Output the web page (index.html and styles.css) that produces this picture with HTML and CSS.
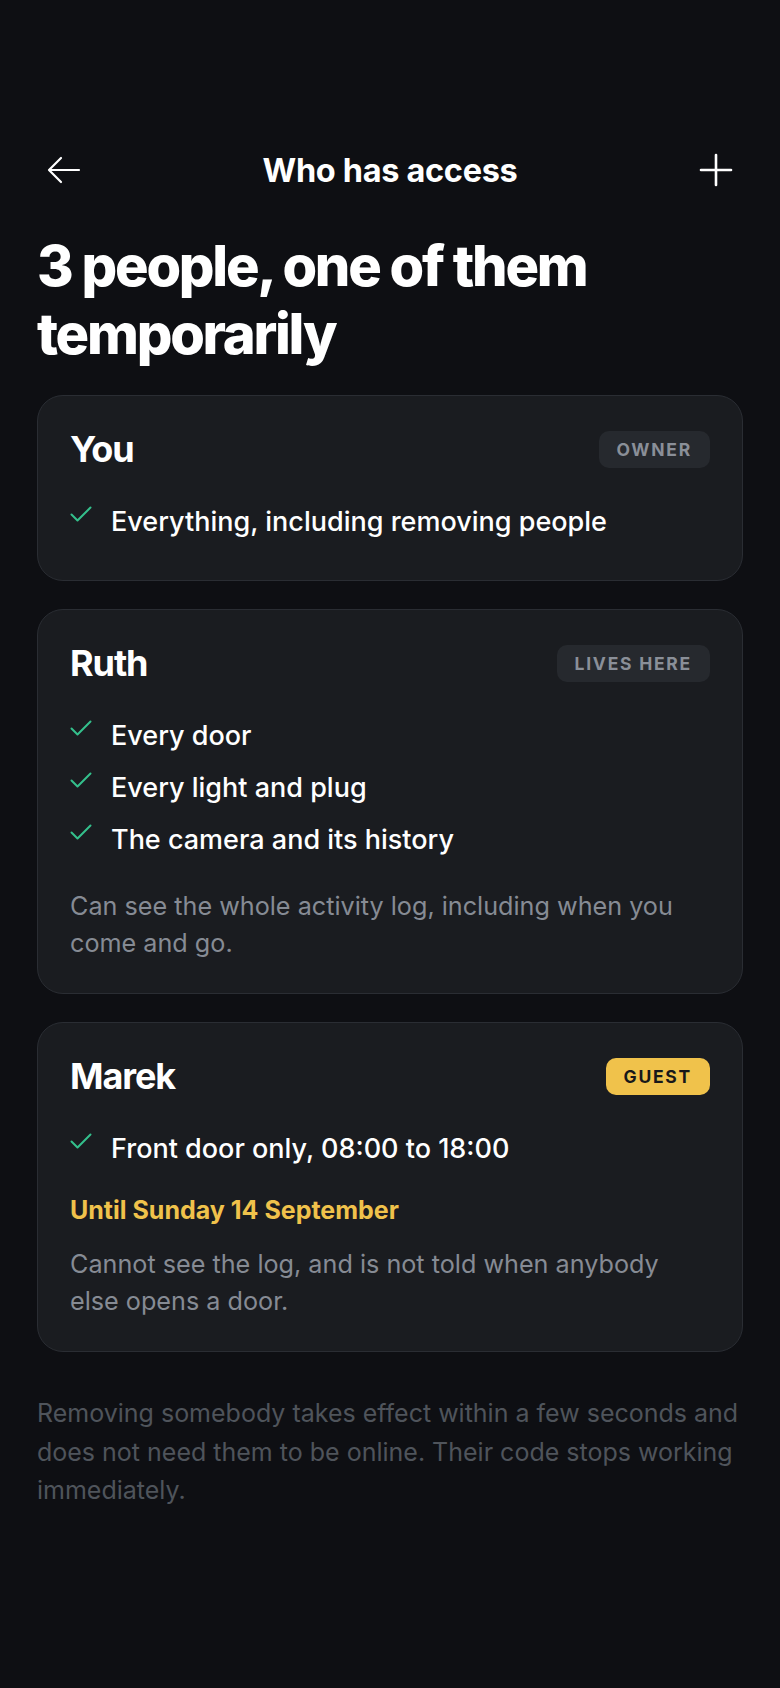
FILE: index.html
```html
<!DOCTYPE html>
<html lang="en">
<head>
    <meta charset="UTF-8">
    <meta name="viewport" content="width=device-width, initial-scale=1.0">
    <title>Who has access</title>
    <link rel="stylesheet" href="styles.css">
</head>
<body>
    <div id="page">
        <header>
            <button class="icon-btn" aria-label="Back">
                <svg width="34" height="28" viewBox="0 0 34 28" fill="none" stroke="#fff" stroke-width="2.2" stroke-linecap="round" stroke-linejoin="round">
                    <path d="M32 14H3"/>
                    <path d="M14 2L2 14l12 12"/>
                </svg>
            </button>
            <h1>Who has access</h1>
            <button class="icon-btn" aria-label="Add">
                <svg width="34" height="34" viewBox="0 0 34 34" fill="none" stroke="#fff" stroke-width="2.6" stroke-linecap="round">
                    <path d="M17 2v30"/>
                    <path d="M2 17h30"/>
                </svg>
            </button>
        </header>

        <h2 class="summary">3 people, one of them temporarily</h2>

        <div class="cards">
            <div class="card">
                <div class="card-head">
                    <span class="name">You</span>
                    <span class="badge">Owner</span>
                </div>
                <ul class="perms">
                    <li><span class="check"></span>Everything, including removing people</li>
                </ul>
            </div>

            <div class="card">
                <div class="card-head">
                    <span class="name">Ruth</span>
                    <span class="badge">Lives here</span>
                </div>
                <ul class="perms">
                    <li><span class="check"></span>Every door</li>
                    <li><span class="check"></span>Every light and plug</li>
                    <li><span class="check"></span>The camera and its history</li>
                </ul>
                <p class="note">Can see the whole activity log, including when you come and go.</p>
            </div>

            <div class="card">
                <div class="card-head">
                    <span class="name">Marek</span>
                    <span class="badge guest">Guest</span>
                </div>
                <ul class="perms">
                    <li><span class="check"></span>Front door only, 08:00 to 18:00</li>
                </ul>
                <div class="until">Until Sunday 14 September</div>
                <p class="note">Cannot see the log, and is not told when anybody else opens a door.</p>
            </div>
        </div>

        <p class="footnote">Removing somebody takes effect within a few seconds and does not need them to be online. Their code stops working immediately.</p>
    </div>

    <template id="check-tpl">
        <svg width="22" height="18" viewBox="0 0 22 18" fill="none" stroke="#34c08c" stroke-width="2" stroke-linecap="round" stroke-linejoin="round">
            <path d="M1.5 9.5l6 6L20.5 2.5"/>
        </svg>
    </template>

    <script>
        // 给每一项加上勾号
        const tpl = document.getElementById('check-tpl');
        document.querySelectorAll('.check').forEach(el => {
            el.appendChild(tpl.content.cloneNode(true));
        });
    </script>
</body>
</html>
```

FILE: styles.css
```css
:root {
    --bg-color: #0e0f13;
    --card-bg: #1a1c20;
    --card-border: #2a2d33;
    --text-color: #ffffff;
    --muted: #868b94;
    --dim: #4f545b;
    --badge-bg: #26292e;
    --badge-text: #8a8f98;
    --yellow: #f0c24b;
    --green: #34c08c;
}
* {
    box-sizing: border-box;
}
body {
    font-family: Inter, 'Noto Sans', sans-serif;
    background-color: var(--bg-color);
    color: var(--text-color);
    margin: 0;
    padding: 0;
}
#page {
    padding: 142px 37px 80px;
    min-height: 100vh;
}
header {
    display: flex;
    align-items: center;
    justify-content: space-between;
    height: 56px;
}
header h1 {
    margin: 0;
    font-size: 32.5px;
    font-weight: 700;
    letter-spacing: -0.01em;
}
.icon-btn {
    background: transparent;
    border: none;
    padding: 0;
    width: 44px;
    height: 44px;
    display: flex;
    align-items: center;
    justify-content: center;
    cursor: pointer;
}
.icon-btn:first-child {
    justify-content: flex-start;
    margin-left: 10px;
}
.icon-btn:last-child {
    justify-content: flex-end;
    margin-right: 10px;
}
.summary {
    margin: 34px 0 27px;
    font-size: 56px;
    line-height: 68px;
    font-weight: 800;
    letter-spacing: -0.04em;
}
.cards {
    display: flex;
    flex-direction: column;
    gap: 28px;
}
.card {
    background-color: var(--card-bg);
    border: 1px solid var(--card-border);
    border-radius: 26px;
    padding: 32px 32px 32px;
}
.card-head {
    display: flex;
    align-items: center;
    justify-content: space-between;
    height: 42px;
}
.name {
    font-size: 36px;
    font-weight: 700;
    letter-spacing: -0.03em;
}
.badge {
    height: 37px;
    display: flex;
    align-items: center;
    padding: 0 18px;
    border-radius: 10px;
    background-color: var(--badge-bg);
    color: var(--badge-text);
    font-size: 17.5px;
    font-weight: 700;
    letter-spacing: 0.1em;
    text-transform: uppercase;
}
.badge.guest {
    background-color: var(--yellow);
    color: #17181a;
}
.perms {
    list-style: none;
    margin: 30px 0 0;
    padding: 0;
    display: flex;
    flex-direction: column;
    gap: 8px;
}
.perms li {
    display: flex;
    align-items: flex-start;
    padding: 4px 0;
    font-size: 27px;
    line-height: 36px;
    font-weight: 500;
}
.perms li:last-child {
    margin-bottom: 4px;
}
.check {
    flex: 0 0 auto;
    width: 22px;
    margin: 1px 19px 0 0;
    display: flex;
}
.until {
    margin-top: 17px;
    color: var(--yellow);
    font-size: 25px;
    line-height: 36px;
    font-weight: 700;
}
.until + .note {
    margin-top: 18px;
}
.note {
    margin: 22px 0 0;
    color: var(--muted);
    font-size: 25.2px;
    line-height: 36.5px;
}
.footnote {
    margin: 42px 0 0;
    color: var(--dim);
    font-size: 25px;
    line-height: 38.5px;
}
```
